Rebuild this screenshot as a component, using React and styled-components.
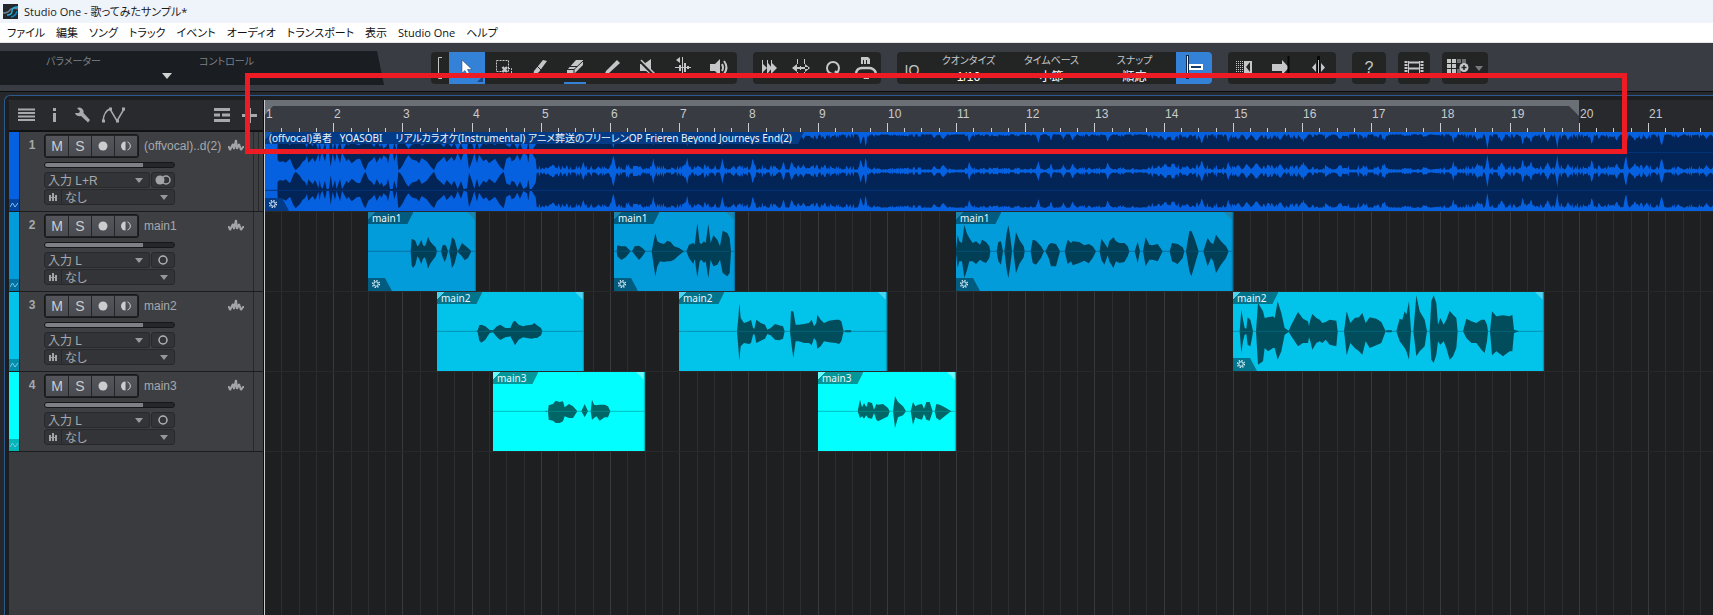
import React from 'react';
import styled, { createGlobalStyle } from 'styled-components';

// one beat is 17.3px at this zoom level, four beats to a bar
const BEAT = 17.3;
const LAST_BEAT = 160;
const SONG_END_BAR = 20;
const TIMELINE_LEFT = 265;
const NUMBER_WIDTH = 30;

const beatX = (beat) => Math.floor(beat * BEAT - 0.5);
const barX = (bar) => Math.max(0, beatX((bar - 1) * 4));

const menus = ['ファイル', '編集', 'ソング', 'トラック', 'イベント', 'オーディオ', 'トランスポート', '表示', 'Studio One', 'ヘルプ'];

const tracks = [
    {
        name: '(offvocal)..d(2)', input: '入力 L+R', stereo: true,
        color: '#0561e0', dark: '#03459f', tab: '#043b86',
        events: [
            { title: '(offvocal)勇者   YOASOBI\u3000 リアルカラオケ(Instrumental) アニメ葬送のフリーレンOP Frieren Beyond Journeys End(2)', start: 0, stereo: true, fx: true },
        ],
    },
    {
        name: 'main1', input: '入力 L',
        color: '#029cdb', dark: '#02719f', tab: '#025c80', wave: '#013f57', fade: '#1a86b0',
        events: [
            { title: 'main1', start: 103, width: 108, fx: true, shape: '128,0 131,37,42 135,36,50 142,32,40 148,15 152,18,20 160,35,38 165,18,22 170,15,18 175,25,30 180,44,52 186,30,38 195,20,25 203,12,15 207,0 219,0 224,18 230,20,32 235,15,20 240,0 243,0 247,15,18 252,42,50 260,35 265,15 269,0 272,5 282,25,15 290,18,27 300,10,20 310,0' },
            { title: 'main1', start: 349, width: 121, fx: true, shape: '8,0 10,18,15 22,15,26 35,15,18 50,0 54,0 62,15,10 75,17,26 85,10,15 95,0 113,0 118,25,35 124,54,75 130,30,45 138,25,30 150,22,32 160,32,30 170,28,30 180,15,25 195,10,12 210,0 217,0 225,20 238,25,38 242,20,22 250,85,78 257,25,30 262,22,25 270,30,35 275,25,30 283,82,80 290,25 298,48,45 310,35,40 318,15,25 326,62,65 340,55,75 347,40,65 351,0' },
            { title: 'main1', start: 691, width: 277, fx: true, shape: '0,5 5,50 10,30 18,25,30 25,80 32,55,60 40,40,30 50,25,30 60,30,38 72,20,25 78,35,30 90,28,35 100,15,20 103,0 122,0 127,28,30 135,30,40 141,0 145,0 152,55 157,78,80 162,50 168,0 172,0 180,57,65 190,35,38 203,15,18 206,0 224,0 230,35 240,32,40 255,15,20 264,0 268,0 278,20 285,25,45 300,22,45 312,0 326,0 335,35,38 345,25,30 350,30,42 370,28,35 385,18,28 398,22,36 410,15,20 420,0 431,0 436,38,25 445,25,40 455,10,12 460,30 472,42,50 480,30 490,25,35 505,25,32 515,15 520,0 536,0 545,28,35 552,0 561,0 569,42,45 580,20,25 590,18,25 605,22,30 620,0 641,0 648,25,30 665,22,38 680,12,20 685,0 690,0 700,60 706,62,75 715,40,45 728,0 742,0 755,40,45 765,25,20 772,22,30 780,50,65 795,30,40 810,15,20 818,0' },
        ],
    },
    {
        name: 'main2', input: '入力 L',
        color: '#02c4eb', dark: '#028fab', tab: '#02748c', wave: '#024d5c', fade: '#4bd5f0',
        events: [
            { title: 'main2', start: 172, width: 147, shape: '118,0 122,3 127,18,28 133,20,34 145,15,25 158,4,5 168,3 180,15,18 190,20,26 205,10,18 220,10,15 228,28,30 234,32,42 245,20,25 258,15,18 270,18,20 285,20,22 292,25,20 300,18,20 312,10,12 316,0' },
            { title: 'main2', start: 414, width: 208, shape: '174,0 178,40,50 181,85,88 185,40,45 195,25,35 210,30,38 216,35 222,10 226,8 232,35 245,25,28 258,20,22 265,5,8 275,10,12 288,22,25 300,18,27 312,15,22 317,0 333,0 336,60,30 343,60,80 350,20,30 360,20,30 375,22,35 390,25,35 398,35,42 405,15,20 412,25,30 415,50,52 425,35,45 435,25,30 450,32,33 470,35 480,35,38 487,30 494,0 500,3 515,3 518,0' },
            { title: 'main2', start: 968, width: 311, fx: true, shape: '20,0 25,65 30,35,30 35,10 40,8 44,42,40 52,35,45 58,10,15 60,0 69,0 75,85,100 90,60,90 95,40,50 105,42,60 120,45,50 125,40,50 134,90,85 145,55,60 155,10 167,2 175,20,15 195,58,45 210,38,35 225,30,35 228,15,18 232,35,30 238,52,55 250,40,35 260,35,30 268,25,35 278,28,25 290,35,40 310,32,45 314,0 333,0 341,60,72 352,25,35 365,40,50 378,42,60 388,55,70 398,25,30 410,42,50 430,38,42 445,28,35 458,0 461,3 475,3 478,0 490,0 500,38,30 508,35,40 515,60,50 520,50,60 528,90,85 534,0 541,0 550,108,75 560,60 575,35,45 582,0 590,0 595,90,85 602,108,95 610,85,70 615,20,30 622,40 632,20,30 640,35,50 650,62,85 660,50,75 670,40,50 674,0 690,0 700,38,20 715,30,35 730,25,35 745,35,55 755,35,65 762,20,30 765,0 771,0 777,60,72 790,45,60 810,48,75 830,45,60 838,50,60 843,5 858,0' },
        ],
    },
    {
        name: 'main3', input: '入力 L',
        color: '#02feff', dark: '#02b5b6', tab: '#03979a', wave: '#026566', fade: '#66ffff',
        events: [
            { title: 'main3', start: 228, width: 152, shape: '157,0 160,2 165,0 167,18,25 180,22,28 188,32,35 200,28,35 210,30 215,12,15 228,22,20 240,15,20 253,0 265,0 275,22,18 285,0 293,0 297,35,25 303,20 310,18,15 320,20,28 335,20,18 345,15,18 352,0' },
            { title: 'main3', start: 553, width: 138, shape: '119,0 126,35,20 132,12,15 138,25,22 145,12 150,28,20 162,25,22 168,5 175,22,25 180,20,30 195,22 210,10,15 215,0 225,0 231,45,50 240,28,18 255,15,12 264,0 278,0 285,28,40 292,15,18 300,20,22 312,22,25 318,8 325,28,25 335,28 344,0 350,0 355,22,20 365,20,27 380,12,15 395,3 401,0' },
        ],
    },
];

// mono clips: "x,up,down" samples in thirds of a pixel
function clipPoints(shape) {
    const samples = shape.split(' ').map((s) => s.split(',').map(Number));
    const top = samples.map(([x, up]) => `${x},${118 - up}`);
    const bottom = samples.map(([x, up, down]) => `${x},${118 + (down === undefined ? up : down)}`).reverse();
    return top.concat(bottom).join(' ');
}

// backing track, loud intro: [x, amplitude], also in thirds of a pixel
const intro = [
    [0, 0], [37, 0], [38, 25], [44, 30], [55, 28], [62, 32], [75, 20], [85, 45], [92, 55], [105, 42], [112, 30], [120, 24], [126, 12], [130, 32],
    [143, 18], [150, 30], [155, 20], [160, 5], [164, 30], [167, 12], [172, 2], [180, 28], [185, 2], [192, 4], [197, 44], [203, 5], [210, 30], [215, 2],
    [225, 34], [231, 2], [245, 28], [250, 20], [260, 34], [268, 28], [275, 22], [285, 20], [295, 45], [301, 55], [310, 32], [320, 24], [328, 14],
    [335, 32], [345, 15], [350, 24], [355, 10], [365, 18], [369, 34], [375, 3], [383, 3], [388, 28], [395, 2], [400, 54], [406, 50], [413, 40],
    [422, 22], [430, 10], [440, 22], [455, 26], [462, 34], [470, 18], [485, 28], [498, 45], [507, 55], [516, 34], [530, 22], [537, 14],
    [545, 30], [560, 14], [566, 26], [570, 24], [578, 3], [588, 26], [596, 2], [606, 5], [612, 52], [620, 30], [628, 4], [636, 34], [642, 8],
    [655, 28], [664, 22], [672, 34], [690, 20], [705, 44], [716, 55], [724, 20], [735, 14], [740, 28], [748, 24], [757, 8], [765, 26], [775, 3],
    [786, 10], [790, 32], [794, 3], [800, 3], [812, 22], [815, 50],
];

// after the intro only these hits leave room beside the wave: [x, size, half width]
const hits = [
    [863, 20, 14], [955, 28, 6], [1000, 14, 9], [1045, 46, 7], [1090, 22, 6], [1125, 16, 9], [1165, 38, 6], [1267, 40, 5], [1300, 16, 14],
    [1372, 38, 5], [1405, 16, 8], [1463, 40, 6], [1530, 16, 9], [1555, 28, 5], [1580, 30, 6], [1615, 20, 8], [1655, 16, 8], [1680, 20, 6],
    [1787, 40, 4], [1802, 46, 4], [2007, 16, 7], [2035, 18, 9], [2113, 28, 5], [2320, 30, 5], [2358, 26, 4], [2395, 20, 7], [2423, 24, 6],
    [2528, 30, 4], [2680, 16, 14], [2700, 22, 14], [2725, 22, 16], [2765, 16, 12], [2810, 34, 7], [2890, 28, 6], [2920, 18, 10],
    [2945, 22, 12], [2975, 24, 12], [3010, 18, 9], [3045, 22, 9], [3080, 12, 10], [3115, 28, 12], [3188, 14, 6], [3225, 18, 14],
    [3295, 18, 6], [3358, 22, 6], [3565, 30, 5], [3637, 24, 8], [3667, 48, 5], [3710, 28, 7], [3773, 38, 5], [3798, 34, 4], [3847, 26, 8],
    [3877, 48, 5], [3910, 20, 9], [3980, 36, 6], [4055, 24, 8], [4083, 48, 6], [4110, 24, 10], [4145, 20, 7], [4190, 40, 6], [4240, 14, 9],
    [4325, 16, 12],
];

function songSamples() {
    const list = [...intro];
    let seed = 7;
    for (let x = 820; x < 7200; x += 3) {
        seed = (seed * 16807) % 2147483647;
        const noise = seed / 2147483647;
        // bars 9 to 13 and 16 to 18 are quieter
        const calm = (x > 1810 && x < 2660) || (x > 3380 && x < 3540);
        let room = 4 + noise * noise * noise * (calm ? 9 : 16);
        hits.forEach(([at, size, half]) => {
            const d = Math.abs(x - at);
            const reach = half * 1.6;
            if (d < reach) {
                room = Math.max(room, size * (1 - d / reach) * (d < 3 ? 1 : 0.7 + noise * 0.5));
            }
        });
        list.push([x, 57 - room]);
    }
    return list;
}

const song = songSamples();

function songPoints(middle) {
    return song.map(([x, a]) => `${x},${middle - a}`)
        .concat(song.map(([x, a]) => `${x},${middle + a}`).reverse())
        .join(' ');
}

const range = (count) => Array.from({ length: count }, (_, i) => i);

// only bars whose number fits in the window get one
const visibleBars = () => Math.floor((window.innerWidth - TIMELINE_LEFT - NUMBER_WIDTH) / (BEAT * 4)) + 1;

function WaveIcon() {
    return (
        <svg width="16" height="14" viewBox="0 0 16 14" fill="none" stroke="#a2a5a8" strokeWidth="2" strokeLinejoin="bevel">
            <path d="M0 8 H1 L2 11 L5 5 L6 10 L8 1 L9 10 L11 5 L13 11 L15 8 H16" />
        </svg>
    );
}

function GearIcon() {
    return (
        <svg width="8" height="8" viewBox="0 0 16 16" fill="none" stroke="#e8f4fa">
            <circle cx="8" cy="8" r="4.500" strokeWidth="2" />
            <circle cx="8" cy="8" r="7" strokeWidth="2.500" strokeDasharray="2.500 3" />
        </svg>
    );
}

function Event({ event, track }) {
    return (
        <EventBox $color={track.color} $wide={!event.width} style={{ left: event.start, width: event.width }}>
            {event.stereo ? (
                <svg width="2400" height="79" viewBox="0 0 7200 237">
                    <polygon points={songPoints(60)} fill="#022457" />
                    <polygon points={songPoints(174)} fill="#022457" />
                    <path d="M0 61 H7200 M0 175 H7200" stroke="#04347c" strokeWidth="3" />
                </svg>
            ) : (
                <svg width={event.width} height="79" viewBox={`0 0 ${event.width * 3} 237`}>
                    <polygon points={clipPoints(event.shape)} fill={track.wave} />
                    <path d={`M0 118 H${event.width * 3}`} stroke={track.tab} strokeWidth="3" opacity="0.600" />
                    <path d={`M${event.width * 3 - 27} 0 h24 v24 z`} fill={track.fade} />
                    <path d={`M${event.width * 3 - 2} 0 V237`} stroke={track.dark} strokeWidth="3" />
                </svg>
            )}
            <EventTitle $color={track.tab} $fade={track.fade || '#1258b4'}>{event.title}</EventTitle>
            {event.fx && <EventFx $color={track.tab}><GearIcon /></EventFx>}
        </EventBox>
    );
}

function Track({ track, number }) {
    return (
        <TrackRow>
            <Strip $color={track.color}>
                <StripFoot $color={track.dark}>
                    <svg width="8" height="6" viewBox="0 0 8 6" fill="none" stroke="#7fc4ea" strokeWidth="1">
                        <path d="M0 5 L2.500 1 L5 5 L8 1" />
                    </svg>
                </StripFoot>
            </Strip>
            <TrackNumber>{number}</TrackNumber>
            <TrackBody>
                <TrackTop>
                    <Switches>
                        <SwitchButton aria-label="Mute">M</SwitchButton>
                        <SwitchButton aria-label="Solo">S</SwitchButton>
                        <SwitchButton aria-label="Record">
                            <svg width="10" height="10"><circle cx="5" cy="5" r="4.500" fill="#cbcccd" /></svg>
                        </SwitchButton>
                        <SwitchButton aria-label="Monitor">
                            <svg width="10" height="10" viewBox="0 0 10 10">
                                <path d="M4.500 0.500 A4.500 4.500 0 0 0 4.500 9.500 Z" fill="#cbcccd" />
                                <path d="M6.500 1 A4.200 4.200 0 0 1 6.500 9" fill="none" stroke="#cbcccd" />
                            </svg>
                        </SwitchButton>
                    </Switches>
                    <TrackName>{track.name}</TrackName>
                    <WaveIcon />
                </TrackTop>
                <Volume type="range" min="0" max="100" defaultValue="76" aria-label={`${track.name} volume`} />
                <SelectRow>
                    <SelectBox>
                        <TrackSelect aria-label="Input"><option>{track.input}</option></TrackSelect>
                        <Caret />
                    </SelectBox>
                    <ChannelButton aria-label="Channel mode">
                        {track.stereo ? (
                            <svg width="16" height="10" viewBox="0 0 16 10">
                                <circle cx="5" cy="5" r="4.500" fill="#a2a5a8" />
                                <circle cx="11" cy="5" r="4" fill="none" stroke="#a2a5a8" strokeWidth="1.500" />
                            </svg>
                        ) : (
                            <svg width="10" height="10"><circle cx="5" cy="5" r="4" fill="none" stroke="#b0b2b4" strokeWidth="1.500" /></svg>
                        )}
                    </ChannelButton>
                </SelectRow>
                <SelectRow>
                    <SelectBox>
                        <SelectIcon>
                            <svg width="8" height="8" viewBox="0 0 8 8" fill="#a2a5a8">
                                <path d="M0 2h2v6H0z M3 0h2v8H3z M6 2h2v6H6z M0 4h8v1H0z" />
                            </svg>
                        </SelectIcon>
                        <TrackSelect aria-label="Instrument"><option>なし</option></TrackSelect>
                        <Caret />
                    </SelectBox>
                </SelectRow>
            </TrackBody>
            <Rail />
            {track.stereo && <Rail />}
        </TrackRow>
    );
}

function Ruler() {
    return (
        <RulerBox>
            <LoopRange style={{ width: barX(SONG_END_BAR) }}>
                <svg width="10" height="10"><path d="M0 0 H8 L0 9 Z" fill="#6b6f76" /></svg>
                <svg width="10" height="10"><path d="M0 0 H10 V10 Z" fill="#6b6f76" /></svg>
            </LoopRange>
            <Ticks height="9">
                {range(LAST_BEAT).filter((i) => i > 0).map((i) => (
                    <rect key={i} x={beatX(i)} y={i % 4 === 0 ? 0 : 5} width="1" height="9" fill="#c9cbce" />
                ))}
            </Ticks>
            {range(visibleBars()).map((i) => (
                <BarNumber key={i} style={{ left: barX(i + 1) + 1 }}>{i + 1}</BarNumber>
            ))}
        </RulerBox>
    );
}

function Toolbar() {
    return (
        <ToolbarBox>
            <ParameterPanel>
                <ParameterLabel>パラメーター</ParameterLabel>
                <svg width="10" height="6"><path d="M0 0 H10 L5 6 Z" fill="#d0d2d4" /></svg>
                <ParameterLabel>コントロール</ParameterLabel>
            </ParameterPanel>
            <ToolGroups>
                <ToolGroup>
                    <Bracket viewBox="0 0 18 32"><path d="M11 5.500 H7.500 V26.500 H11" /></Bracket>
                    <Tool $active aria-label="Arrow">
                        <svg width="36" height="32" viewBox="0 0 36 32">
                            <path d="M13 8 V21 L16 18.500 L19 24 L21 23 L18.500 17.500 H23 Z" fill="#fff" stroke="#1c3f6c" strokeWidth="0.500" />
                            <path d="M34 24 V30 H28 Z" fill="#174a86" />
                        </svg>
                    </Tool>
                    <Tool aria-label="Range">
                        <svg width="36" height="32" viewBox="0 0 36 32" fill="none" stroke="#c4c6c8">
                            <rect x="11.500" y="8.500" width="12" height="11" strokeDasharray="2 1" />
                            <path d="M23 16.500 H26.500 V22" strokeDasharray="2 1" />
                            <path d="M17.500 15 L22 20 M22 15 L17.500 20" strokeWidth="2.500" />
                        </svg>
                    </Tool>
                    <Tool aria-label="Split">
                        <svg width="36" height="32" viewBox="0 0 36 32">
                            <path d="M22 8 L26 9 L18 20 L12 24 L13 19 Z" fill="#c4c6c8" />
                            <path d="M16 14 L20 18" stroke="#232525" />
                        </svg>
                    </Tool>
                    <Tool $marked aria-label="Eraser">
                        <svg width="36" height="32" viewBox="0 0 36 32">
                            <path d="M19 8 H26 V13 L17 22 H10 V18 Z" fill="#c4c6c8" />
                            <path d="M10 17.500 H17 L26 9 M17 17.500 V22 M13 14.500 H20" fill="none" stroke="#232525" />
                        </svg>
                    </Tool>
                    <Tool aria-label="Paint">
                        <svg width="36" height="32" viewBox="0 0 36 32">
                            <path d="M24 8 L27 11 L15 22 L11 24 L13 19 Z" fill="#c4c6c8" />
                        </svg>
                    </Tool>
                    <Tool aria-label="Mute tool">
                        <svg width="36" height="32" viewBox="0 0 36 32">
                            <path d="M11 12 H15 L22 7 V23 L17 19 H11 Z" fill="#c4c6c8" />
                            <path d="M10 8 L26 24" stroke="#232525" strokeWidth="3" />
                            <path d="M12 8 L26 22" stroke="#c4c6c8" strokeWidth="1.500" />
                        </svg>
                    </Tool>
                    <Tool aria-label="Bend">
                        <svg width="36" height="32" viewBox="0 0 36 32" fill="#c4c6c8">
                            <path d="M17 5h1v20h-1z M10 15h16v1H10z M14 13h2v6h-2z M19 11h2v9h-2z M22 14h2v3h-2z M15 5v6l-4-3z" />
                        </svg>
                    </Tool>
                    <Tool aria-label="Listen">
                        <svg width="36" height="32" viewBox="0 0 36 32">
                            <path d="M9 12 H14 L19 7 V24 L14 19 H9 Z" fill="#c4c6c8" />
                            <path d="M21 12 Q23 15.500 21 19 M23 9 Q28 15.500 23 22" fill="none" stroke="#c4c6c8" strokeWidth="2" />
                        </svg>
                    </Tool>
                </ToolGroup>
                <ToolGroup>
                    <Tool $narrow aria-label="Strip silence">
                        <svg width="32" height="32" viewBox="0 0 32 32" fill="#c4c6c8">
                            <path d="M9 8h1v16H9z M10 12l4 4l-4 4z M14 8h1v16h-1z M15 11l4 5l-4 5z M18 8h1v16h-1z M19 11l5 5l-5 5z" />
                        </svg>
                    </Tool>
                    <Tool $narrow aria-label="Stretch">
                        <svg width="32" height="32" viewBox="0 0 32 32" fill="#c4c6c8">
                            <path d="M12 7h1v5h-1z M12 20h1v4h-1z M19 7h1v5h-1z M19 20h1v4h-1z M15 14h1v4h-1z M10 15h13v2H10z M7 16l5-4v8z M25 16l-5-4v8z" />
                        </svg>
                    </Tool>
                    <Tool $narrow aria-label="Quantize now">
                        <svg width="32" height="32" viewBox="0 0 32 32" fill="none" stroke="#c4c6c8" strokeWidth="2">
                            <circle cx="16" cy="16" r="6" />
                            <path d="M18 19 L23 23" />
                        </svg>
                    </Tool>
                    <Tool $narrow aria-label="Macro">
                        <svg width="32" height="32" viewBox="0 0 32 32">
                            <path d="M12 5 H19 L21 7 V12 H12 Z" fill="#c4c6c8" />
                            <path d="M14.500 8 V12 M17.500 8 V12" stroke="#232525" />
                            <path d="M7 21 Q8 16 13 16 H20 Q25 16 27 21" fill="none" stroke="#c4c6c8" strokeWidth="2.500" />
                            <path d="M13 24 H20 V27 H15 Z" fill="#c4c6c8" />
                        </svg>
                    </Tool>
                </ToolGroup>
                <ToolGroup>
                    <IqButton>IQ</IqButton>
                    <Setting>
                        <SettingName>クオンタイズ</SettingName>
                        <SettingSelect><option>1/16</option></SettingSelect>
                    </Setting>
                    <Setting>
                        <SettingName>タイムベース</SettingName>
                        <SettingSelect><option>小節</option></SettingSelect>
                    </Setting>
                    <Setting>
                        <SettingName>スナップ</SettingName>
                        <SettingSelect><option>順応</option></SettingSelect>
                    </Setting>
                    <Tool $active aria-label="Snap">
                        <svg width="36" height="32" viewBox="0 0 36 32">
                            <path d="M11.500 3 V27" stroke="#10294a" strokeWidth="3" />
                            <path d="M11.500 4 V26" stroke="#e6eef8" />
                            <rect x="14" y="13" width="12" height="4" fill="#143b6e" stroke="#fff" strokeWidth="2" />
                        </svg>
                    </Tool>
                </ToolGroup>
                <ToolGroup>
                    <Tool aria-label="Scroll">
                        <svg width="36" height="32" viewBox="0 0 36 32">
                            <path d="M8.500 9 V24 M10.500 9 V24 M12.500 9 V24 M14.500 9 V24" stroke="#c4c6c8" strokeDasharray="1 1" />
                            <path d="M16 9 H24 V24 H16 Z" fill="#c4c6c8" />
                            <path d="M22 10 V20 L18 15 Z" fill="#232525" />
                        </svg>
                    </Tool>
                    <Tool aria-label="Follow">
                        <svg width="36" height="32" viewBox="0 0 36 32">
                            <path d="M8 12 H18 V8 L25 15.500 L18 23 V19 H8 Z" fill="#c4c6c8" />
                            <path d="M24.500 4 V26" stroke="#070808" strokeWidth="2" />
                        </svg>
                    </Tool>
                    <Tool aria-label="Continue">
                        <svg width="36" height="32" viewBox="0 0 36 32">
                            <path d="M18.500 4 V26" stroke="#070808" strokeWidth="3" />
                            <path d="M18.500 8 V23" stroke="#c4c6c8" />
                            <path d="M12 15.500 L16 11 V20 Z M25 15.500 L21 11 V20 Z" fill="#c4c6c8" />
                        </svg>
                    </Tool>
                </ToolGroup>
                <ViewGroups>
                    <ToolGroup>
                        <HelpButton aria-label="Help">?</HelpButton>
                    </ToolGroup>
                    <ToolGroup>
                        <Tool $narrow aria-label="Video">
                            <svg width="32" height="32" viewBox="0 0 32 32" fill="none" stroke="#c4c6c8">
                                <path d="M8 9 V24 M24 9 V24" strokeWidth="3" strokeDasharray="2 1" />
                                <path d="M10.500 9 V24 M21.500 9 V24" strokeWidth="1" />
                                <path d="M10 10.500 H22 M10 16.500 H22 M10 22 H22" strokeWidth="2" />
                            </svg>
                        </Tool>
                    </ToolGroup>
                    <ToolGroup>
                        <Tool aria-label="Add panel">
                            <svg width="46" height="32" viewBox="0 0 46 32">
                                <path d="M5 7h4v4H5z M10 7h4v4h-4z M5 12h4v4H5z M10 12h4v4h-4z M5 17h4v5H5z M10 17h4v5h-4z" fill="#c4c6c8" />
                                <path d="M15 7h4v4h-4z M20 7h4v4h-4z M15 17h4v5h-4z" fill="#6c6e71" />
                                <circle cx="22" cy="15.500" r="4.500" fill="#c4c6c8" />
                                <path d="M22 13 V18 M19.500 15.500 H24.500" stroke="#232525" strokeWidth="1.500" />
                                <path d="M33 14 H41 L37 19 Z" fill="#787b7e" />
                            </svg>
                        </Tool>
                    </ToolGroup>
                </ViewGroups>
            </ToolGroups>
        </ToolbarBox>
    );
}

function TrackListHeader() {
    return (
        <ListHeader>
            <HeaderButton aria-label="Track list">
                <svg width="20" height="14"><path d="M0 1.500 H17 M0 5 H17 M0 8.500 H17 M0 12 H17" stroke="#a7a9ac" strokeWidth="2" /></svg>
            </HeaderButton>
            <HeaderButton aria-label="Inspector">
                <svg width="10" height="14" fill="#a7a9ac"><path d="M3 0h3v3H3z M3 5h3v9H3z" /></svg>
            </HeaderButton>
            <HeaderButton aria-label="Options">
                <svg width="18" height="16" viewBox="0 0 18 16">
                    <path d="M5 1 A4.500 4.500 0 0 1 11.500 6 L18 13 L16 15.500 L9 9 A4.500 4.500 0 0 1 3 6 H7 L8 4 Z" fill="#a7a9ac" />
                </svg>
            </HeaderButton>
            <HeaderButton aria-label="Automation">
                <svg width="24" height="16" viewBox="0 0 24 16" fill="none" stroke="#a7a9ac">
                    <path d="M1 14 Q2 4 8 2 L15 14 L22 2" strokeWidth="1.500" />
                    <path d="M0 14h3 M7 2h3 M14 14h3 M20 2h3" strokeWidth="3" />
                </svg>
            </HeaderButton>
            <Spacer />
            <HeaderButton aria-label="Layout">
                <svg width="16" height="14" stroke="#a7a9ac" strokeWidth="3"><path d="M0 1.500 H16 M0 7 H6 M8 7 H16 M0 12.500 H16" /></svg>
            </HeaderButton>
            <HeaderButton aria-label="Add track">
                <svg width="15" height="15" stroke="#a7a9ac" strokeWidth="3"><path d="M0 7.500 H15 M7.500 0 V15" /></svg>
            </HeaderButton>
        </ListHeader>
    );
}

function App() {
    return (
        <Page>
            <GlobalStyle />
            <TitleBar>
                <svg width="15" height="15" viewBox="0 0 15 15">
                    <rect width="15" height="15" fill="#22282d" />
                    <path d="M0 9 Q5 9 7 6 Q9 3 15 5" fill="none" stroke="#6d7c86" strokeWidth="1.500" />
                    <path d="M4 11 Q9 11 9 7 Q9 3 15 3" fill="none" stroke="#1fb3e4" strokeWidth="1.500" />
                    <path d="M8 13 Q13 12 14 7" fill="none" stroke="#0c83b6" strokeWidth="1.500" />
                </svg>
                <span>Studio One - 歌ってみたサンプル*</span>
            </TitleBar>
            <MenuBar>
                {menus.map((menu) => <MenuButton key={menu}>{menu}</MenuButton>)}
            </MenuBar>
            <Toolbar />
            <Workspace>
                <Panel>
                    <TrackList>
                        <TrackListHeader />
                        {tracks.map((track, i) => <Track key={track.name} track={track} number={i + 1} />)}
                    </TrackList>
                    <Timeline>
                        <Ruler />
                        <Arrangement>
                            <Grid>
                                {range(LAST_BEAT).filter((i) => i > 0).map((i) => (
                                    <rect key={i} x={beatX(i)} width="1" height="100%" fill={i % 4 === 0 ? '#38393d' : '#2c2d30'} />
                                ))}
                            </Grid>
                            {tracks.map((track) => (
                                <Lane key={track.name}>
                                    {track.events.map((event) => <Event key={event.start} event={event} track={track} />)}
                                </Lane>
                            ))}
                        </Arrangement>
                    </Timeline>
                </Panel>
            </Workspace>
            <Highlight />
        </Page>
    );
}

const GlobalStyle = createGlobalStyle`
    * {
        box-sizing: border-box;
    }
    body {
        margin: 0;
        background: #1e1f21;
        overflow: hidden;
    }
    button, select, input {
        margin: 0;
        padding: 0;
        border: 0;
        background: none;
        font: inherit;
        color: inherit;
    }
    svg {
        display: block;
        flex: none;
    }
`;

const Page = styled.div`
    position: relative;
    display: flex;
    flex-direction: column;
    min-height: 100vh;
    overflow: hidden;
    font-family: "Liberation Sans", "Noto Sans CJK JP", sans-serif;
    font-feature-settings: "palt";
    font-size: 12px;
`;

const TitleBar = styled.header`
    display: flex;
    align-items: center;
    gap: 6px;
    height: 23px;
    padding-left: 3px;
    background: #eff3fa;
    color: #1b1b1b;
    font-family: "Open Sans", "Noto Sans CJK JP", sans-serif;
    font-size: 11px;
    line-height: 22px;
`;

const MenuBar = styled.nav`
    display: flex;
    align-items: center;
    gap: 11px;
    height: 20px;
    padding-left: 7px;
    background: #fff;
    border-bottom: 1px solid #e4e6e8;
    color: #111;
    font-family: "Open Sans", "Noto Sans CJK JP", sans-serif;
    font-size: 11px;
`;

const MenuButton = styled.button`
    line-height: 18px;
    white-space: nowrap;
`;

const ToolbarBox = styled.div`
    display: flex;
    gap: 47px;
    height: 49px;
    padding-top: 8px;
    background: #393c42;
    border-bottom: 1px solid #0c0d0e;
`;

const ParameterPanel = styled.div`
    display: grid;
    flex: none;
    grid-template-columns: 108px 10px 1fr;
    column-gap: 8px;
    width: 384px;
    height: 34px;
    padding-left: 46px;
    background: #1a1d21;
    clip-path: polygon(0 0, 377px 0, 100% 100%, 0 100%);
    svg {
        align-self: end;
        margin-bottom: 6px;
    }
`;

const ParameterLabel = styled.span`
    color: #7d8085;
    font-size: 10px;
    line-height: 22px;
    &:last-child {
        padding-left: 19px;
    }
`;

const ToolGroups = styled.div`
    display: flex;
    align-items: center;
    gap: 16px;
    height: 34px;
    color: #c4c6c8;
`;

const ViewGroups = styled.div`
    display: flex;
    gap: 12px;
`;

const ToolGroup = styled.div`
    display: flex;
    flex: none;
    height: 32px;
    border-radius: 4px;
    background: #232525;
    overflow: hidden;
`;

const Bracket = styled.svg`
    width: 18px;
    height: 32px;
    fill: none;
    stroke: #c4c6c8;
`;

const marker = 'linear-gradient(#3481d8, #3481d8) center bottom / 22px 2px no-repeat';

const Tool = styled.button`
    display: flex;
    justify-content: center;
    min-width: ${(props) => (props.$narrow ? '32px' : '36px')};
    height: 32px;
    background: ${(props) => (props.$active ? '#3481d8' : props.$marked ? marker : 'transparent')};
`;

const IqButton = styled.button`
    width: 30px;
    padding-top: 3px;
    font-size: 14px;
`;

const HelpButton = styled.button`
    width: 34px;
    font-size: 16px;
`;

const Setting = styled.label`
    display: flex;
    flex-direction: column;
    align-items: center;
    width: 83px;
`;

const SettingName = styled.span`
    font-size: 10px;
    line-height: 18px;
    white-space: nowrap;
`;

const SettingSelect = styled.select`
    appearance: none;
    width: 60px;
    height: 14px;
    color: #fff;
    font-size: 12px;
    line-height: 14px;
    text-align: center;
    text-align-last: center;
`;

const Workspace = styled.main`
    display: flex;
    flex: 1;
    padding: 3px 0 0 4px;
    background: #25272a;
`;

const Panel = styled.div`
    display: flex;
    flex: 1;
    min-width: 0;
    padding: 4px 0 0 4px;
    border-top: 1px solid #2c5a8f;
    border-left: 1px solid #2c5a8f;
    border-top-left-radius: 6px;
    background: #1c1e20;
`;

const TrackList = styled.section`
    flex: none;
    width: 255px;
    background: #393b3f;
    border-right: 1px solid #0c0d0e;
`;

const ListHeader = styled.div`
    display: flex;
    align-items: center;
    gap: 12px;
    height: 32px;
    padding: 0 6px 0 9px;
    background: #282a2d;
    border-top-left-radius: 3px;
    border-bottom: 2px solid #111213;
`;

const HeaderButton = styled.button`
    display: flex;
`;

const Spacer = styled.div`
    flex: 1;
`;

const TrackRow = styled.article`
    display: flex;
    height: 80px;
    background: #3d3f43;
    border-bottom: 1px solid #1b1c1e;
`;

const Strip = styled.div`
    display: flex;
    align-items: flex-end;
    width: 11px;
    background: ${(props) => props.$color};
    border-right: 1px solid #222426;
`;

const StripFoot = styled.div`
    display: flex;
    align-items: center;
    justify-content: center;
    width: 10px;
    height: 12px;
    background: ${(props) => props.$color};
`;

const TrackNumber = styled.span`
    width: 24px;
    padding-top: 6px;
    color: #a7a9ac;
    font-size: 12px;
    font-weight: 700;
    line-height: 14px;
    text-align: center;
`;

const TrackBody = styled.div`
    flex: 1;
    padding: 2px 9px 0 0;
`;

const TrackTop = styled.div`
    display: flex;
    align-items: center;
    height: 24px;
`;

const Switches = styled.div`
    display: flex;
    gap: 1px;
    height: 24px;
    padding: 1px;
    border: 1px solid #17181a;
    border-radius: 3px;
    background: #222426;
`;

const SwitchButton = styled.button`
    display: flex;
    align-items: center;
    justify-content: center;
    width: 22px;
    background: linear-gradient(#54565b, #494b50);
    color: #cbcccd;
    font-size: 14px;
`;

const TrackName = styled.span`
    flex: 1;
    padding-left: 5px;
    color: #a7a9ac;
    font-size: 12px;
    white-space: nowrap;
`;

const Volume = styled.input`
    display: block;
    appearance: none;
    width: 131px;
    height: 6px;
    margin: 4px 0;
    border: 1px solid #151617;
    border-radius: 3px;
    background: linear-gradient(90deg, #7e8087 76%, #25272a 76%);
    &::-webkit-slider-thumb {
        appearance: none;
        width: 1px;
        height: 4px;
    }
`;

const SelectRow = styled.div`
    display: flex;
    gap: 1px;
    width: 131px;
    margin-bottom: 1px;
`;

const SelectBox = styled.div`
    display: flex;
    flex: 1;
    align-items: center;
    min-width: 0;
    height: 16px;
    padding-right: 6px;
    border: 1px solid #26282a;
    border-radius: 3px;
    background: #323437;
`;

const SelectIcon = styled.span`
    display: flex;
    align-items: center;
    justify-content: center;
    width: 17px;
    height: 14px;
    border-right: 1px solid #26282a;
`;

const TrackSelect = styled.select`
    appearance: none;
    flex: 1;
    min-width: 0;
    height: 14px;
    padding: 1px 0 0 3px;
    color: #a7a9ac;
    font-size: 12px;
    line-height: 14px;
`;

const Caret = styled.span`
    border: 4px solid transparent;
    border-top: 5px solid #96999c;
    border-bottom: 0;
`;

const ChannelButton = styled.button`
    display: flex;
    align-items: center;
    justify-content: center;
    width: 24px;
    border: 1px solid #26282a;
    border-radius: 3px;
    background: #323437;
`;

const Rail = styled.div`
    width: 5px;
    border-left: 1px solid #26282a;
    &:nth-child(4):last-child {
        width: 10px;
    }
`;

const Timeline = styled.section`
    display: flex;
    flex: 1;
    flex-direction: column;
    min-width: 0;
    border-left: 1px solid #c8c9ca;
    background: #1e1f21;
    overflow: hidden;
`;

const RulerBox = styled.div`
    position: relative;
    height: 32px;
    background: #27292c;
`;

const LoopRange = styled.div`
    display: flex;
    justify-content: space-between;
    height: 32px;
    background: #383b41;
    border-top: 6px solid #6b6f76;
`;

const Ticks = styled.svg`
    position: absolute;
    left: 0;
    bottom: 0;
    width: 100%;
`;

const BarNumber = styled.span`
    position: absolute;
    top: 7px;
    color: #c9cbce;
    font-size: 12px;
    line-height: 14px;
`;

const Arrangement = styled.div`
    position: relative;
    flex: 1;
`;

const Grid = styled.svg`
    position: absolute;
    left: 0;
    top: 0;
    width: 100%;
    height: 100%;
`;

const Lane = styled.div`
    position: relative;
    height: 80px;
    border-bottom: 1px solid #29292c;
`;

const EventBox = styled.div`
    position: absolute;
    top: 0;
    right: ${(props) => (props.$wide ? '0' : 'auto')};
    height: 79px;
    background: ${(props) => props.$color};
    overflow: hidden;
`;

const EventTitle = styled.span`
    position: absolute;
    left: 0;
    top: 0;
    height: 12px;
    padding: 0 12px 0 4px;
    background: linear-gradient(135deg, ${(props) => props.$fade} 5px, ${(props) => props.$color} 5px);
    clip-path: polygon(0 0, 100% 0, calc(100% - 6px) 100%, 0 100%);
    color: #eef6fb;
    font-family: "Noto Sans", "Noto Sans CJK JP", sans-serif;
    font-size: 10px;
    line-height: 12px;
    white-space: pre;
`;

const EventFx = styled.span`
    position: absolute;
    left: 0;
    bottom: 0;
    width: 24px;
    height: 13px;
    padding: 2px 0 0 4px;
    background: ${(props) => props.$color};
    clip-path: polygon(0 0, 17px 0, 100% 100%, 0 100%);
`;

const Highlight = styled.div`
    position: absolute;
    left: 245px;
    top: 73px;
    width: 1382px;
    height: 81px;
    border: 5px solid #ed1c24;
    pointer-events: none;
`;

export default App;
